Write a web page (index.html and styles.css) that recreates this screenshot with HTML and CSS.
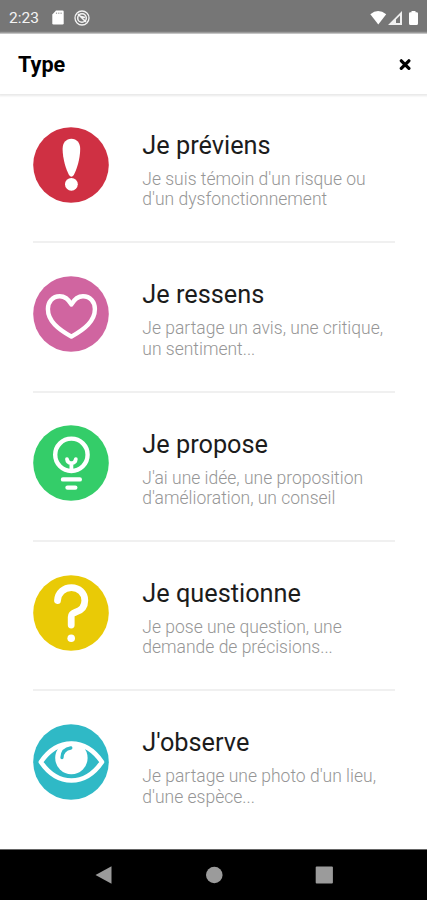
FILE: index.html
```
<!DOCTYPE html>
<html lang="fr">
<head>
<meta charset="utf-8">
<title>Type</title>
<link rel="stylesheet" href="styles.css">
</head>
<body>
<div class="status">
  <span class="time">2:23</span>
  <svg class="sd" width="12" height="15" viewBox="0 0 12 15"><path fill="#fff" d="M4 .5h6.500q1.200 0 1.200 1.200v11.600q0 1.200-1.200 1.200h-9q-1.200 0-1.200-1.200V4.400z"/><path stroke="#aaa" stroke-width="1.200" d="M4.500 2.500v1.500M6.800 2.500v1.500M9.100 2.500v1.500"/></svg>
  <svg class="sync" width="16" height="16" viewBox="0 0 16 16" fill="none" stroke="#f4f4f4"><circle cx="8" cy="8" r="7" stroke-width="1.300"/><circle cx="8" cy="8" r="4.300" stroke-width="1.500"/><path stroke-width="1.600" d="M4 4l8 8M7 6.500l4 1"/></svg>
  <svg class="signals" width="50" height="16" viewBox="0 0 50 16"><path fill="#fff" d="M.3 4.200Q8 -2 16.200 4.200L8.300 14.500z"/><path fill="#f0f0f0" fill-rule="evenodd" d="M18 15L32 1v14zM26 9.500V13h4V5.500z"/><path fill="#fff" d="M41.500 1h4v1.200h1.200q1.300 0 1.300 1.300v10q0 1.500-1.500 1.500h-6q-1.500 0-1.500-1.500v-10q0-1.300 1.300-1.300h1.200z"/></svg>
</div>
<header class="header">
  <h1>Type</h1>
  <svg width="12" height="12" viewBox="0 0 12 12"><path d="M2.300 1.800l7.600 7.600M9.900 1.800l-7.600 7.600" stroke="#000" stroke-width="3.200" stroke-linecap="round"/></svg>
</header>
<main class="list">
  <section class="item">
    <svg class="icon red" viewBox="0 0 76 76"><circle class="disc" cx="38" cy="38" r="37.800"/><path fill="#fff" d="M38.400 11.800C43.800 11.800 47.200 16 47.200 22C47.200 32 43.500 43 40.800 48Q38.400 51.500 36 48C33.300 43 29.600 32 29.600 22C29.600 16 33 11.800 38.400 11.800z"/><circle fill="#fff" cx="38.400" cy="57.300" r="6.400"/></svg>
    <div class="text"><h2>Je préviens</h2><p>Je suis témoin d'un risque ou<br>d'un dysfonctionnement</p></div>
  </section>
  <section class="item">
    <svg class="icon pink" viewBox="0 0 76 76"><circle class="disc" cx="38" cy="38" r="37.800"/><path class="line heart" d="M38.400 28.500C35 22.500 31 20.300 26.800 20.300C19.500 20.300 14.900 26 14.900 33C14.900 45 25 53 38.400 60.600C51.800 53 61.900 45 61.900 33C61.900 26 57.300 20.300 50 20.300C45.800 20.300 41.800 22.500 38.400 28.500z"/></svg>
    <div class="text"><h2>Je ressens</h2><p>Je partage un avis, une critique,<br>un sentiment...</p></div>
  </section>
  <section class="item">
    <svg class="icon green" viewBox="0 0 76 76"><circle class="disc" cx="38" cy="38" r="37.800"/><g class="line"><circle cx="38.400" cy="29.800" r="16.200"/><path d="M34 34.200Q34.300 37.800 38.400 38.500Q42.500 37.800 42.800 34.200M38.400 38.500V46" stroke-width="3.800"/><path d="M30 54.400H46.800M34.500 62.600H42.300"/></g></svg>
    <div class="text"><h2>Je propose</h2><p>J'ai une idée, une proposition<br>d'amélioration, un conseil</p></div>
  </section>
  <section class="item">
    <svg class="icon yellow" viewBox="0 0 76 76"><circle class="disc" cx="38" cy="38" r="37.800"/><path class="line question" d="M24.500 25.500C25 17.500 31 12.700 38.400 12.700C46 12.700 51.800 18 51.800 25.500C51.800 32 48 35.500 43 37C39.500 38.200 38.200 39 38.200 42V50"/><circle fill="#fff" cx="38.200" cy="63.300" r="3.800"/></svg>
    <div class="text"><h2>Je questionne</h2><p>Je pose une question, une<br>demande de précisions...</p></div>
  </section>
  <section class="item">
    <svg class="icon teal" viewBox="0 0 76 76"><circle class="disc" cx="38" cy="38" r="37.800"/><path class="line eye" d="M7.800 38C16 26 26.500 19.600 38.400 19.600S60.800 26 69 38C60.800 50 50.300 56.500 38.400 56.500S16 50 7.800 38z"/><circle fill="#fff" cx="38.400" cy="34" r="16.200"/><path class="glint" d="M29 33.500Q29.500 25 37.800 24"/></svg>
    <div class="text"><h2>J'observe</h2><p>Je partage une photo d'un lieu,<br>d'une espèce...</p></div>
  </section>
</main>
<nav class="nav">
  <svg width="240" height="18" viewBox="0 0 240 18" fill="#9b9b9b"><path d="M.5 9L16.500.3v17.400z"/><circle cx="119.300" cy="9" r="8.300"/><rect x="220.700" y=".4" width="17.200" height="17.200" rx="1"/></svg>
</nav>
</body>
</html>
```
FILE: styles.css
```
* { box-sizing: border-box; }

body {
  margin: 0;
  width: 427px;
  height: 900px;
  display: flex;
  flex-direction: column;
  overflow: hidden;
  background: #fff;
  font-family: Roboto, "Liberation Sans", sans-serif;
}

svg { display: block; flex: none; }

h1, h2, p { margin: 0; white-space: nowrap; }

.status {
  height: 33px;
  flex: none;
  display: flex;
  align-items: center;
  padding: 2px 7px 0 9px;
  background: #767676;
  color: #f4f4f4;
}

.time { width: 43px; font-size: 15.500px; }
.sync { margin-left: 10px; }
.signals { margin-left: auto; }

.header {
  height: 61px;
  flex: none;
  display: flex;
  align-items: center;
  justify-content: space-between;
  padding: 3px 16px 0 18px;
  box-shadow: 0 1px 2px 1px #e9e9e9, inset 0 1px 0 #c4c4c4;
}

.header h1 {
  font-size: 21.600px;
  line-height: 24px;
  font-weight: 700;
}

.list {
  flex: 1;
  padding: 0 32px 0 33px;
}

.item {
  height: 149.300px;
  display: flex;
  align-items: flex-start;
  gap: 33px;
  padding-top: 32.700px;
  border-bottom: 2px solid #f0f0f0;
}

.item:last-child { border-bottom: 0; }

.icon { width: 76px; height: 76px; margin-left: .300px; }

.red { color: #cf3043; }
.pink { color: #d065a0; }
.green { color: #34cd69; }
.yellow { color: #e9ca06; }
.teal { color: #2fb9c6; }

.disc { fill: currentColor; }

.line {
  fill: none;
  stroke: #fff;
  stroke-width: 4.400;
  stroke-linecap: round;
  stroke-linejoin: round;
}

.question { stroke-width: 6.800; }
.eye { stroke-width: 4.600; }

.glint {
  fill: none;
  stroke: currentColor;
  stroke-width: 3.300;
  stroke-linecap: round;
}

.text { padding-top: 4.300px; }

.text h2 {
  font-size: 25.300px;
  line-height: 30px;
  font-weight: 400;
  color: #1c1c1c;
}

.text p {
  margin-top: 8px;
  font-size: 17.500px;
  line-height: 20.500px;
  font-weight: 300;
  color: #969696;
}

.nav {
  height: 51px;
  flex: none;
  display: flex;
  align-items: center;
  padding-left: 94.500px;
  background: #000;
  border-top: 1px solid #666;
}
```
